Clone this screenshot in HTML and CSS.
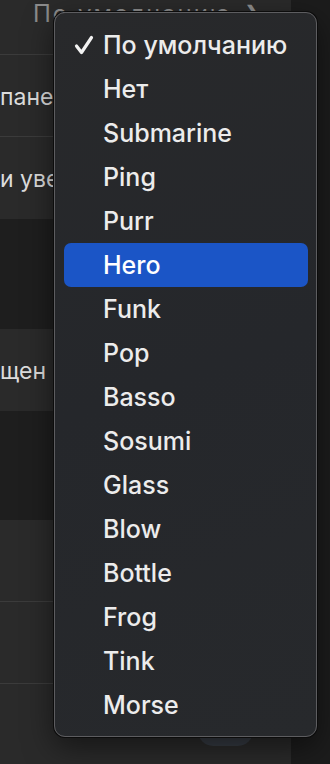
FILE: index.html
```html
<!DOCTYPE html>
<html>
<head>
    <meta charset="utf-8" />
    <title>Звук</title>
    <link rel="stylesheet" href="styles.css">
</head>
<body>
    <div class="window">
      <!-- панель настроек за меню -->
      <div class="panel">
        <div class="group">
          <div class="row row_first">
            <span class="value">По умолчанию</span>
            <span class="chevron">&#x276F;</span>
          </div>
          <div class="row"><span class="label">пане</span></div>
          <div class="row"><span class="label">и уве</span></div>
        </div>
        <div class="gap"></div>
        <div class="group">
          <div class="row"><span class="label">щен</span></div>
        </div>
        <div class="gap"></div>
        <div class="group">
          <div class="row"></div>
          <div class="row"></div>
          <div class="row row_last">
            <span class="toggle"></span>
          </div>
        </div>
      </div>
      <div class="side"></div>
    </div>

    <!-- выпадающее меню -->
    <ul class="menu">
      <li class="item checked">
        <svg class="check" width="20" height="20" viewBox="0 0 20 20">
          <path d="M2.5 11 L7.5 17.5 L17.5 2.5" fill="none" stroke="#f2f2f2" stroke-width="3.2" stroke-linecap="round" stroke-linejoin="round"/>
        </svg>
        По умолчанию
      </li>
      <li class="item">Нет</li>
      <li class="item">Submarine</li>
      <li class="item">Ping</li>
      <li class="item">Purr</li>
      <li class="item cur">Hero</li>
      <li class="item">Funk</li>
      <li class="item">Pop</li>
      <li class="item">Basso</li>
      <li class="item">Sosumi</li>
      <li class="item">Glass</li>
      <li class="item">Blow</li>
      <li class="item">Bottle</li>
      <li class="item">Frog</li>
      <li class="item">Tink</li>
      <li class="item">Morse</li>
    </ul>
</body>
</html>
```

FILE: styles.css
```css
* {
  margin: 0;
  padding: 0;
  box-sizing: border-box;
}
html, body {
  width: 330px;
  height: 764px;
  overflow: hidden;
  background-color: #1c1c1c;
}
body {
  position: relative;
  font-family: Inter, "Noto Sans", "Liberation Sans", sans-serif;
}
.window {
  display: flex;
  height: 764px;
}
/* левая часть с группами */
.panel {
  width: 291px;
  display: flex;
  flex-direction: column;
}
.group {
  background-color: #2a2a2a;
}
.gap {
  height: 110px;
  background-color: #1e1e1e;
}
.row {
  height: 82px;
  display: flex;
  align-items: center;
  border-bottom: 1px solid #3b3b3b;
  font-size: 24px;
  color: #dcdcdc;
  white-space: nowrap;
}
.group .row:last-child {
  border-bottom: none;
}
/* подпись слева, под меню */
.label {
  font-size: 23px;
  padding-top: 2px;
}
.row_first {
  margin-top: -28px;
  height: 83px;
  padding-left: 33px;
  color: #8c8c8c;
  letter-spacing: 2px;
}
.row_first .chevron {
  margin-left: 12px;
  font-size: 20px;
}
.row_last {
  height: 80px;
  justify-content: flex-end;
  align-items: flex-end;
  padding-right: 38px;
}
.toggle {
  width: 55px;
  height: 30px;
  border-radius: 15px;
  background-color: #363b43;
  margin-bottom: 18px;
}
.side {
  flex: 1;
  background-color: #1c1c1c;
}
/* меню */
.menu {
  position: absolute;
  left: 54px;
  top: 12px;
  width: 263px;
  height: 725px;
  list-style: none;
  padding: 10px 8px 8px 9px;
  border: 1px solid #5d5d60;
  border-radius: 11px;
  background: linear-gradient(160deg, #28292b 0%, #25272b 50%, #27292c 100%);
  box-shadow: 0 0 0 1px #0c0c0c, 0 10px 30px rgba(0, 0, 0, 0.5);
}
.item {
  position: relative;
  height: 44px;
  line-height: 44px;
  padding-left: 39px;
  border-radius: 7px;
  font-size: 25px;
  font-weight: 500;
  color: #ececec;
}
.check {
  position: absolute;
  left: 10px;
  top: 12px;
}
.menu .cur {
  background-color: #1b55c6;
  color: #fff;
}
```
